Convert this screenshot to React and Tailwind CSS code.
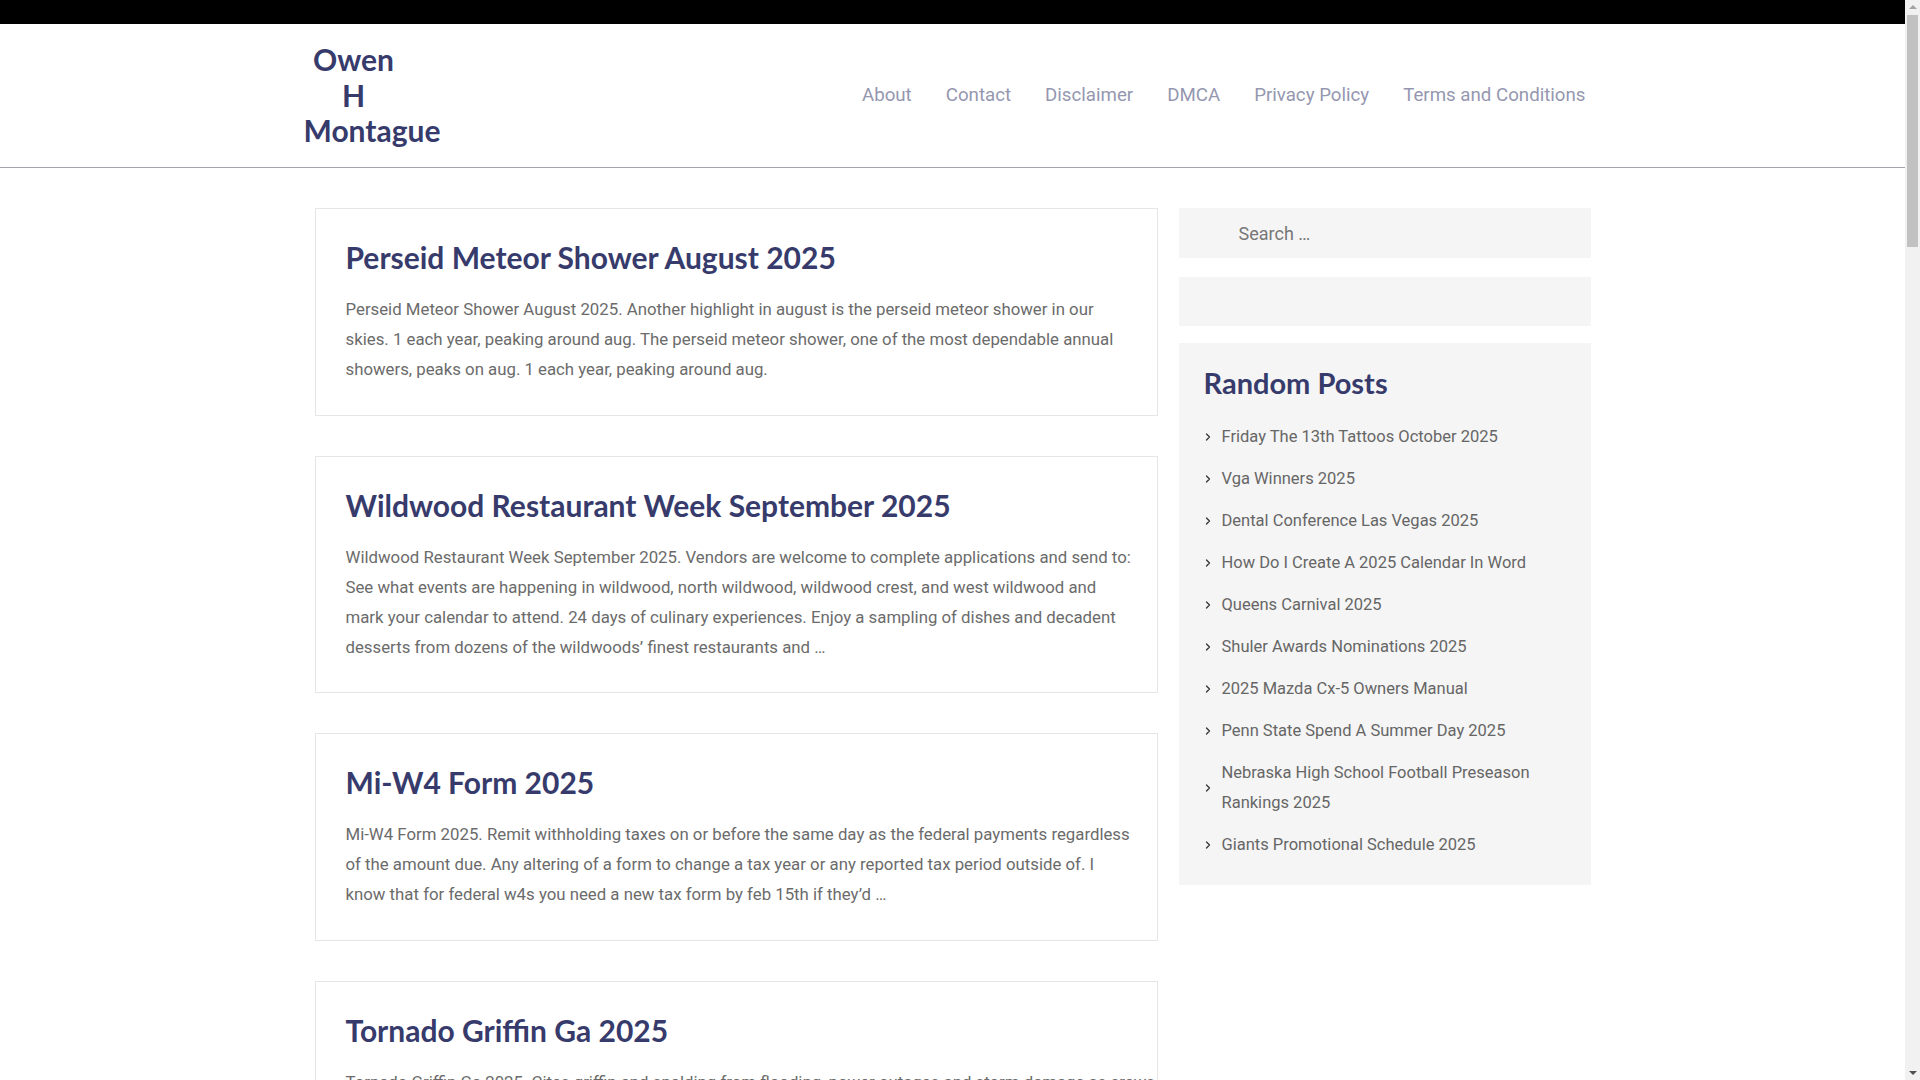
import { ChevronRight } from "lucide-react";

const headingFont = { fontFamily: '"Lato", "Noto Sans", sans-serif' };

const navItems = ["About", "Contact", "Disclaimer", "DMCA", "Privacy Policy", "Terms and Conditions"];

// excerpt lines kept as in the source layout
const posts = [
  {
    title: "Perseid Meteor Shower August 2025",
    lines: [
      "Perseid Meteor Shower August 2025. Another highlight in august is the perseid meteor shower in our",
      "skies. 1 each year, peaking around aug. The perseid meteor shower, one of the most dependable annual",
      "showers, peaks on aug. 1 each year, peaking around aug.",
    ],
  },
  {
    title: "Wildwood Restaurant Week September 2025",
    lines: [
      "Wildwood Restaurant Week September 2025. Vendors are welcome to complete applications and send to:",
      "See what events are happening in wildwood, north wildwood, wildwood crest, and west wildwood and",
      "mark your calendar to attend. 24 days of culinary experiences. Enjoy a sampling of dishes and decadent",
      "desserts from dozens of the wildwoods’ finest restaurants and …",
    ],
  },
  {
    title: "Mi-W4 Form 2025",
    lines: [
      "Mi-W4 Form 2025. Remit withholding taxes on or before the same day as the federal payments regardless",
      "of the amount due. Any altering of a form to change a tax year or any reported tax period outside of. I",
      "know that for federal w4s you need a new tax form by feb 15th if they’d …",
    ],
  },
  {
    title: "Tornado Griffin Ga 2025",
    lines: [
      "Tornado Griffin Ga 2025. Cites griffin and spalding from flooding, power outages and storm damage as crews",
      "work to restore the area after the tornado passed through the county.",
    ],
  },
];

const randomPosts = [
  "Friday The 13th Tattoos October 2025",
  "Vga Winners 2025",
  "Dental Conference Las Vegas 2025",
  "How Do I Create A 2025 Calendar In Word",
  "Queens Carnival 2025",
  "Shuler Awards Nominations 2025",
  "2025 Mazda Cx-5 Owners Manual",
  "Penn State Spend A Summer Day 2025",
  "Nebraska High School Football Preseason Rankings 2025",
  "Giants Promotional Schedule 2025",
];

const PostCard = ({ post }) => (
  <article className="border border-[#e6e6e6] bg-white px-[30px] pt-[28px] pb-[30.5px]">
    <h2 className="mb-[17px] text-[30px] leading-[40px] font-bold text-[#373b6c]" style={headingFont}>
      {post.title}
    </h2>
    <p className="text-[16.8px] leading-[30px] text-[#6b6b6b]">
      {post.lines.map((line) => (
        <span key={line} className="block whitespace-nowrap">
          {line}
        </span>
      ))}
    </p>
  </article>
);

const Scrollbar = () => (
  <div className="fixed top-0 right-0 flex h-screen w-[15px] flex-col items-center bg-[#f1f1f1]">
    <div className="mt-[5px] h-0 w-0 border-x-[4px] border-b-[4px] border-x-transparent border-b-[#a3a3a3]" />
    <div className="mt-[6px] h-[232px] w-[11px] bg-[#c1c1c1]" />
    <div className="mt-auto mb-[5px] h-0 w-0 border-x-[4px] border-t-[4px] border-x-transparent border-t-[#505050]" />
  </div>
);

export default function App() {
  return (
    <div
      className="h-screen overflow-hidden bg-white pr-[15px]"
      style={{ fontFamily: '"Roboto", "Noto Sans", sans-serif' }}
    >
      <div className="h-[24px] bg-black" />

      <header className="border-b border-[#a3a3ab] bg-white">
        <div className="mx-auto flex h-[143px] max-w-[1300px] items-center justify-between px-3">
          <a
            href="#"
            className="-ml-[11px] w-[100px] text-center text-[30px] leading-[35.5px] font-bold text-[#373b6c]"
            style={headingFont}
          >
            Owen H Montague
          </a>
          <nav className="flex items-center gap-[34px] pr-[5px]">
            {navItems.map((item) => (
              <a key={item} href="#" className="text-[18.7px] text-[#9597b0]">
                {item}
              </a>
            ))}
          </nav>
        </div>
      </header>

      <main className="mx-auto mt-[40px] flex max-w-[1300px] gap-[21px] px-3 pb-[60px]">
        <div className="flex w-[843px] flex-col gap-[40px]">
          {posts.map((post) => (
            <PostCard key={post.title} post={post} />
          ))}
        </div>

        <aside className="flex w-[412px] flex-col gap-[19px]">
          <div className="flex h-[50px] items-center bg-[#f5f5f5] pl-[60px]">
            <span className="text-[18px] text-[#777777]">Search …</span>
          </div>
          <div className="h-[49px] bg-[#f5f5f5]" />
          <section className="mt-[-2px] bg-[#f5f5f5] px-[25px] pt-[22px] pb-[25px]">
            <h3 className="mb-[21px] text-[29px] leading-[36px] font-bold text-[#373b6c]" style={headingFont}>
              Random Posts
            </h3>
            <ul className="flex flex-col gap-[12px]">
              {randomPosts.map((title) => (
                <li key={title} className="flex items-center">
                  <ChevronRight size={12} strokeWidth={2.5} className="-ml-[2px] shrink-0 text-[#333333]" />
                  <a href="#" className="ml-[8px] pr-[10px] text-[16.5px] leading-[30px] text-[#666666]">
                    {title}
                  </a>
                </li>
              ))}
            </ul>
          </section>
        </aside>
      </main>

      <Scrollbar />
    </div>
  );
}
